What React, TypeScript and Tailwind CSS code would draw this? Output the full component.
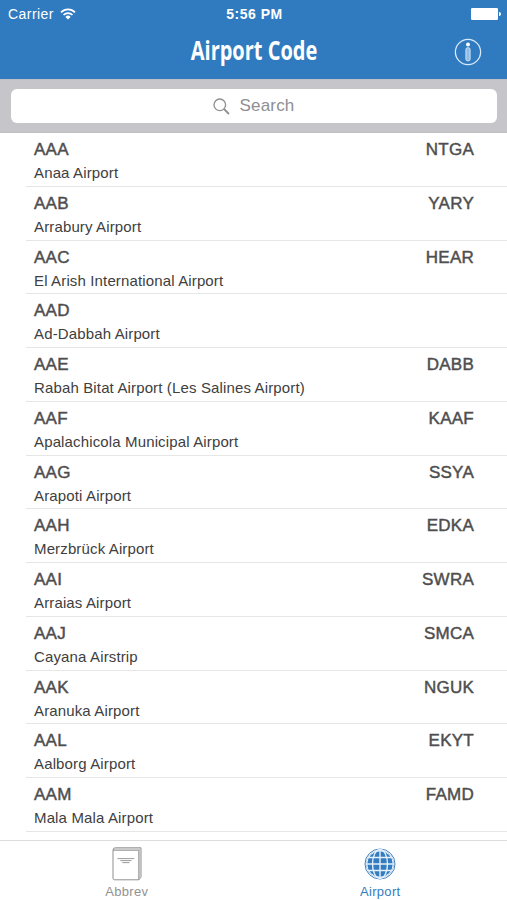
type Airport = { iata: string; icao?: string; name: string }

const airports: Airport[] = [
  { iata: 'AAA', icao: 'NTGA', name: 'Anaa Airport' },
  { iata: 'AAB', icao: 'YARY', name: 'Arrabury Airport' },
  { iata: 'AAC', icao: 'HEAR', name: 'El Arish International Airport' },
  { iata: 'AAD', name: 'Ad-Dabbah Airport' },
  { iata: 'AAE', icao: 'DABB', name: 'Rabah Bitat Airport (Les Salines Airport)' },
  { iata: 'AAF', icao: 'KAAF', name: 'Apalachicola Municipal Airport' },
  { iata: 'AAG', icao: 'SSYA', name: 'Arapoti Airport' },
  { iata: 'AAH', icao: 'EDKA', name: 'Merzbrück Airport' },
  { iata: 'AAI', icao: 'SWRA', name: 'Arraias Airport' },
  { iata: 'AAJ', icao: 'SMCA', name: 'Cayana Airstrip' },
  { iata: 'AAK', icao: 'NGUK', name: 'Aranuka Airport' },
  { iata: 'AAL', icao: 'EKYT', name: 'Aalborg Airport' },
  { iata: 'AAM', icao: 'FAMD', name: 'Mala Mala Airport' },
]

function WifiIcon() {
  return (
    <svg width="16" height="12" viewBox="0 0 16 12" fill="none" stroke="white" strokeWidth="1.7">
      <path d="M1 4.3a9.9 9.9 0 0 1 14 0" />
      <path d="M3.5 7a6.4 6.4 0 0 1 9 0" />
      <path d="M8 11.6L5.4 8.9a3.7 3.7 0 0 1 5.2 0z" fill="white" stroke="none" />
    </svg>
  )
}

function BatteryIcon() {
  return (
    <svg width="30" height="12" viewBox="0 0 30 12" fill="white">
      <rect x="0" y="0" width="27" height="12" rx="1.2" />
      <path d="M28 4a2 2 0 0 1 0 4z" />
    </svg>
  )
}

function InfoIcon() {
  return (
    <svg width="28" height="28" viewBox="0 0 28 28" fill="none" stroke="#d9eafa">
      <circle cx="14" cy="14" r="12.6" strokeWidth="1.3" />
      <circle cx="14" cy="6.6" r="2" fill="white" stroke="none" />
      <rect x="11.9" y="9.7" width="4.2" height="13.2" rx="1.8" fill="#8fbce5" strokeWidth="0.9" />
    </svg>
  )
}

function SearchIcon() {
  return (
    <svg width="17" height="17" viewBox="0 0 17 17" fill="none" stroke="#8e8e93">
      <circle cx="6.8" cy="6.8" r="5.8" strokeWidth="1.3" />
      <path d="M11 11l5 5" strokeWidth="1.8" />
    </svg>
  )
}

function BookIcon() {
  return (
    <svg width="30" height="34" viewBox="0 0 30 34" fill="none" stroke="#8f8f8f" strokeWidth="1">
      <path d="M1 3.2Q1 .8 3.2 .8H29V30.2L26.8 32.8" />
      <path d="M1 3.2H26.8V32.8H2.6Q1 32.8 1 31.2Z" />
      <path d="M2 2h25.8V31" stroke="#b5b5b5" />
      <path d="M5.5 11.6h16.8M8.3 13.6h11.2M10.3 15.6h7.2" strokeWidth="0.9" />
    </svg>
  )
}

function GlobeIcon() {
  return (
    <svg width="32" height="32" viewBox="0 0 32 32" fill="none">
      <circle cx="16" cy="16" r="15" stroke="#3b7fbd" strokeWidth="1" />
      <circle cx="16" cy="16" r="13.6" fill="#347cbe" />
      <g stroke="#e4f0fa" strokeWidth="1.4">
        <path d="M16 2v28M2 16h28M4 9.5h24M4 22.5h24" />
        <ellipse cx="16" cy="16" rx="7.5" ry="14.5" />
        <circle cx="16" cy="16" r="13.2" strokeWidth="1" />
      </g>
    </svg>
  )
}

function AirportRow({ airport }: { airport: Airport }) {
  return (
    <li className="ml-[26px] h-[53.75px] border-b border-[#e6e6e7] pl-2 pr-[33px] pt-[6px]">
      <div className="flex justify-between text-[17px] leading-[22px] tracking-[0.25px] text-[#4e4e4e] [-webkit-text-stroke:0.45px_#4e4e4e]">
        <span>{airport.iata}</span>
        <span>{airport.icao}</span>
      </div>
      <div className="mt-[2px] text-[15px] leading-[20px] tracking-[0.14px] text-[#404040]">{airport.name}</div>
    </li>
  )
}

export default function App() {
  return (
    <div className="flex h-[900px] w-[507px] flex-col overflow-hidden bg-white font-['Liberation_Sans',Arial,sans-serif]">
      <header className="h-[79px] shrink-0 bg-[#307bc0] text-white">
        <div className="grid h-[27px] grid-cols-3 items-center pl-2 pr-[6px] text-[14px]">
          <div className="flex items-center gap-[6px] tracking-[0.45px]">
            <span className="pt-[2px]">Carrier</span>
            <WifiIcon />
          </div>
          <div className="pt-px text-center font-bold tracking-[0.5px]">5:56 PM</div>
          <div className="flex justify-end">
            <BatteryIcon />
          </div>
        </div>
        <div className="grid h-[49px] grid-cols-[1fr_auto_1fr] items-center pr-[25px] pl-[25px]">
          <span />
          <h1 className="-mt-[2px] w-[126px] scale-x-[0.74] whitespace-nowrap text-center font-['Open_Sans',sans-serif] text-[27px] font-bold">
            <span className="-mx-6">Airport Code</span>
          </h1>
          <button className="justify-self-end">
            <InfoIcon />
          </button>
        </div>
      </header>

      <div className="h-[54px] shrink-0 border-b border-t border-[#c0c0c4] bg-[#c6c6ca] pl-[11px] pr-[10px] pt-[9px]">
        <div className="flex h-[34px] items-center justify-center gap-[9px] rounded-md bg-white text-[17px] tracking-[0.2px] text-[#8e8e93]">
          <SearchIcon />
          <span>Search</span>
        </div>
      </div>

      <ul className="min-h-0 flex-1 overflow-hidden">
        {airports.map((airport) => (
          <AirportRow key={airport.iata} airport={airport} />
        ))}
      </ul>

      <nav className="grid h-[60px] shrink-0 grid-cols-2 border-t border-[#dcdcdc] bg-white text-[13px] leading-[16px] tracking-[0.3px]">
        <button className="flex flex-col items-center pt-[6px] text-[#929292]">
          <BookIcon />
          <span className="mt-[3px]">Abbrev</span>
        </button>
        <button className="flex flex-col items-center pt-[7px] text-[#347cbe]">
          <GlobeIcon />
          <span className="mt-1">Airport</span>
        </button>
      </nav>
    </div>
  )
}
